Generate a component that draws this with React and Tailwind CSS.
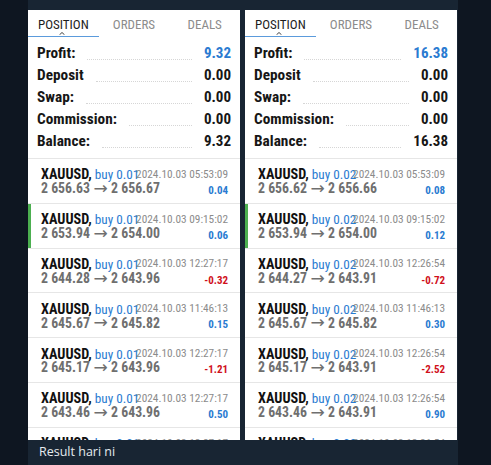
import React from 'react';

const left = {
  profit: '9.32',
  balance: '9.32',
  lot: '0.01',
  trades: [
    ['2024.10.03 05:53:09', '2 656.63', '2 656.67', '0.04'],
    ['2024.10.03 09:15:02', '2 653.94', '2 654.00', '0.06', true],
    ['2024.10.03 12:27:17', '2 644.28', '2 643.96', '-0.32'],
    ['2024.10.03 11:46:13', '2 645.67', '2 645.82', '0.15'],
    ['2024.10.03 12:27:17', '2 645.17', '2 643.96', '-1.21'],
    ['2024.10.03 12:27:17', '2 643.46', '2 643.96', '0.50'],
    ['2024.10.03 12:27:17', '2 643.46', '2 643.96', '0.50'],
  ],
};

const right = {
  profit: '16.38',
  balance: '16.38',
  lot: '0.02',
  trades: [
    ['2024.10.03 05:53:09', '2 656.62', '2 656.66', '0.08'],
    ['2024.10.03 09:15:02', '2 653.94', '2 654.00', '0.12', true],
    ['2024.10.03 12:26:54', '2 644.27', '2 643.91', '-0.72'],
    ['2024.10.03 11:46:13', '2 645.67', '2 645.82', '0.30'],
    ['2024.10.03 12:26:54', '2 645.17', '2 643.91', '-2.52'],
    ['2024.10.03 12:26:54', '2 643.46', '2 643.91', '0.90'],
    ['2024.10.03 12:26:54', '2 643.46', '2 643.91', '0.90'],
  ],
};

const SummaryRow = ({ label, value, blue }) => (
  <div className="flex items-end h-[22px] px-[9px] pb-[4px]">
    <span className="text-[15.3px] font-bold text-[#161616] leading-none">{label}</span>
    <span className="flex-1 mx-3 mb-[1px] border-b border-dotted border-[#d6d6d6]"></span>
    <span className={`text-[15px] font-bold leading-none ${blue ? 'text-[#2a7bd1]' : 'text-[#161616]'}`}>{value}</span>
  </div>
);

const TradeRow = ({ lot, date, open, close, profit, active }) => {
  const neg = profit.startsWith('-');
  return (
    <div className="relative h-[44.8px] shrink-0 border-t border-[#e6e6e6] pl-[13px] pr-[12px] pt-[7px]">
      {active && <div className="absolute left-0 top-0 bottom-0 w-[3px] bg-[#4caf50]"></div>}
      <div className="grid h-[17px] items-center">
        <div className="col-start-1 row-start-1 flex items-baseline leading-none whitespace-nowrap">
          <span className="text-[14.2px] font-bold text-[#111]">XAUUSD,</span>
          <span className="ml-[3px] text-[13.2px] text-[#2a7bd1]">buy {lot}</span>
        </div>
        <div className="col-start-1 row-start-1 justify-self-end text-[11.3px] leading-none text-[#8b8b8b] whitespace-nowrap">{date}</div>
      </div>
      <div className="flex items-end justify-between h-[13px]">
        <span className="flex items-end text-[13.8px] font-bold leading-none text-[#6f6f6f] whitespace-nowrap">
          {open}
          <span className="w-[21px] text-center text-[17px] font-normal leading-none mb-[-1px]" style={{ fontFamily: '"DejaVu Sans", sans-serif' }}>→</span>
          {close}
        </span>
        <span className={`text-[11px] font-bold leading-none ${neg ? 'text-[#d0101b]' : 'text-[#2a7bd1]'}`}>{profit}</span>
      </div>
    </div>
  );
};

const Shot = ({ data }) => (
  <div className="w-[212px] h-[430px] bg-white overflow-hidden flex flex-col">
    <div className="relative grid grid-cols-3 h-[27px] shrink-0 items-center pt-[2px] text-[13px] leading-none">
      <div className="text-center text-[#1d1d1d]">POSITION</div>
      <div className="text-center text-[#8c8c8c]">ORDERS</div>
      <div className="text-center text-[#8c8c8c]">DEALS</div>
      <div className="absolute left-0 bottom-0 w-[71px] h-[1.5px] bg-[#5b9bdc]"></div>
      <svg className="absolute left-[31px] bottom-[2px]" width="6" height="3" viewBox="0 0 6 3">
        <path d="M0.5 2.8 L3 0.5 L5.5 2.8" fill="none" stroke="#444" strokeWidth="1" />
      </svg>
    </div>
    <div className="pt-[6px] pb-[5px] shrink-0">
      <SummaryRow label="Profit:" value={data.profit} blue />
      <SummaryRow label="Deposit" value="0.00" />
      <SummaryRow label="Swap:" value="0.00" />
      <SummaryRow label="Commission:" value="0.00" />
      <SummaryRow label="Balance:" value={data.balance} />
    </div>
    {data.trades.map((t, i) => (
      <TradeRow key={i} lot={data.lot} date={t[0]} open={t[1]} close={t[2]} profit={t[3]} active={t[4]} />
    ))}
  </div>
);

export default function App() {
  return (
    <div
      className="w-[491px] h-[465px] bg-[#0e1621] overflow-hidden"
      style={{ fontFamily: '"Roboto Condensed", Roboto, sans-serif' }}
    >
      <div className="ml-[28px] w-[430px] h-[465px] bg-[#182533] flex flex-col">
        <div className="h-[10px] overflow-hidden pl-[12px]">
          <div className="-mt-[17px] text-[14px] font-semibold text-[#5eb5f7]" style={{ fontFamily: '"Open Sans", sans-serif' }}>Trader</div>
        </div>
        <div className="flex gap-[5px]">
          <Shot data={left} />
          <Shot data={right} />
        </div>
        <div className="h-[25px] flex items-center pl-[11px] text-[12.5px] text-[#e6ebef]" style={{ fontFamily: '"Open Sans", sans-serif' }}>
          Result hari ni
        </div>
      </div>
    </div>
  );
}
